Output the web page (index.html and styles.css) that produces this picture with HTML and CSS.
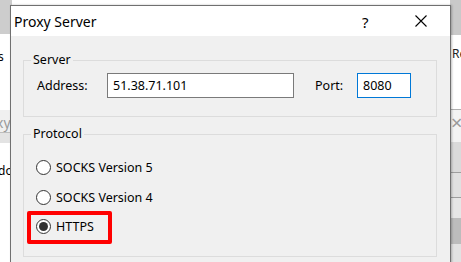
FILE: index.html
```html
<!DOCTYPE html>
<html>
<head>
<meta charset="utf-8">
<link rel="stylesheet" href="styles.css">
</head>
<body>
<div class="desktop">
  <div class="bg-left">
    <div class="bl-top"></div>
    <div class="bl-white"><span class="bl-s">s</span></div>
    <div class="bl-tab"><span class="bl-xy">xy</span></div>
    <div class="bl-band"></div>
    <div class="bl-white2"><span class="bl-do">do</span></div>
  </div>
  <div class="bg-right">
    <div class="br-top"></div>
    <div class="br-white"><span class="br-re">Re</span></div>
    <div class="br-tab"><span class="br-x">×</span></div>
    <div class="br-row r1"></div>
    <div class="br-row r2"></div>
    <div class="br-row r3"></div>
    <div class="br-row r4"></div>
    <div class="br-row r5"></div>
  </div>

  <div class="dialog">
    <div class="titlebar">
      <span class="title">Proxy Server</span>
      <span class="help">?</span>
      <span class="close">
        <svg width="12" height="12" viewBox="0 0 12 12"><path d="M0.5 0.5 L11.5 11.5 M11.5 0.5 L0.5 11.5" stroke="#000" stroke-width="1.1" fill="none"/></svg>
      </span>
    </div>
    <div class="body">
      <fieldset class="group server">
        <legend>Server</legend>
        <div class="row">
          <label class="lbl-address">Address:</label>
          <div class="input address">51.38.71.101</div>
          <label class="lbl-port">Port:</label>
          <div class="input port focused">8080</div>
        </div>
      </fieldset>
      <fieldset class="group protocol">
        <legend>Protocol</legend>
        <div class="radios">
          <div class="radio"><span class="circle"></span><span>SOCKS Version 5</span></div>
          <div class="radio"><span class="circle"></span><span>SOCKS Version 4</span></div>
          <div class="radio highlight"><span class="circle checked"></span><span>HTTPS</span></div>
        </div>
      </fieldset>
    </div>
  </div>
</div>
</body>
</html>
```

FILE: styles.css
```css
*, *::before, *::after { box-sizing: border-box; }
html, body { margin: 0; padding: 0; }
body {
  width: 461px;
  height: 262px;
  overflow: hidden;
  font-family: "Noto Sans", "Open Sans", sans-serif;
  font-size: 12.5px;
  color: #000;
  background: #fff;
}
.desktop {
  position: relative;
  width: 461px;
  height: 262px;
  display: flex;
  justify-content: space-between;
}
.bg-left, .bg-right {
  width: 12px;
  height: 262px;
  display: flex;
  flex-direction: column;
  overflow: hidden;
}
.bg-right { width: 11px; }
.bl-top { height: 34px; background: #cdcdcd; }
.bl-white { height: 76px; background: #fff; position: relative; }
.bl-s { position: absolute; left: -2px; top: 14px; font-size: 12px; }
.bl-tab { height: 23px; background: #f0f0f0; border-bottom: 1px solid #bdbdbd; position: relative; }
.bl-xy { position: absolute; left: -4px; top: 3px; color: #9a9a9a; font-size: 14px; }
.bl-band { height: 10px; background: #e3e3e3; }
.bl-white2 { flex: 1; background: #fff; position: relative; }
.bl-do { position: absolute; left: -2px; top: 19px; font-size: 12px; }

.br-top { height: 35px; background: #c9c9c9; }
.br-white { height: 75px; background: #fff; position: relative; border-bottom: 1px solid #b0b0b0; }
.br-re { position: absolute; left: 2px; top: 10px; font-size: 12px; color: #222; }
.br-tab { height: 32px; background: #f3f3f3; position: relative; }
.br-x { position: absolute; left: 1px; top: 3px; font-size: 20px; color: #9a9a9a; line-height: 1; }
.br-row { border-bottom: 1px solid #9e9e9e; }
.r1 { height: 31px; background: #dadada; }
.r2 { height: 25px; background: #e0e0e0; }
.r3 { height: 20px; background: #e6e6e6; border-bottom: none; }
.r4 { height: 26px; background: #bcbcbc; border-bottom: none; }
.r5 { flex: 1; background: #e2e2e2; border-bottom: none; }

.dialog {
  position: absolute;
  left: 10px;
  top: 5px;
  width: 441px;
  height: 270px;
  border: 1px solid #707070;
  background: #f0f0f0;
  box-shadow: 1px 0 2px rgba(0,0,0,0.25);
  display: flex;
  flex-direction: column;
}
.titlebar {
  height: 30px;
  background: #fff;
  display: flex;
  align-items: center;
  padding-left: 3px;
}
.title {
  font-size: 14px;
  flex: 1;
  padding-top: 1px;
}
.help {
  font-size: 15px;
  width: 16px;
  margin-right: 37px;
  padding-top: 1px;
}
.close {
  width: 12px;
  height: 12px;
  margin-right: 23px;
  display: flex;
}
.body {
  flex: 1;
  padding: 17px 13px 0 12px;
  display: flex;
  flex-direction: column;
  gap: 10px;
}
.group {
  margin: 0;
  border: 1px solid #dcdcdc;
  padding: 0;
  min-width: 0;
}
.group legend {
  margin-left: 7px;
  padding: 0 2px;
  font-size: 12.5px;
  line-height: 14px;
}
.server { height: 64px; }
.server .row {
  display: flex;
  align-items: center;
  padding: 6px 0 0 13px;
}
.lbl-address { width: 70px; }
.lbl-port { margin-left: 21px; width: 42px; }
.input {
  height: 25px;
  background: #fff;
  border: 1px solid #7a7a7a;
  padding: 3px 5px 0;
  line-height: 17px;
}
.address { width: 187px; }
.port { width: 54px; }
.focused { border-color: #0078d7; }

.protocol { height: 130px; }
.radios {
  display: flex;
  flex-direction: column;
  padding: 17px 0 0 12px;
  gap: 11px;
}
.radio {
  display: flex;
  align-items: center;
  gap: 5px;
  height: 19px;
  position: relative;
}
.radio + .radio + .radio { margin-top: -1px; }
.circle {
  width: 15px;
  height: 15px;
  border: 1px solid #333;
  border-radius: 50%;
  background: #fff;
  display: flex;
  align-items: center;
  justify-content: center;
}
.circle.checked::after {
  content: "";
  width: 9px;
  height: 9px;
  border-radius: 50%;
  background: #333;
}
.highlight::after {
  content: "";
  position: absolute;
  left: -9px;
  top: -6px;
  width: 85px;
  height: 33px;
  border: 4px solid #f00;
  border-radius: 2px;
}
```
